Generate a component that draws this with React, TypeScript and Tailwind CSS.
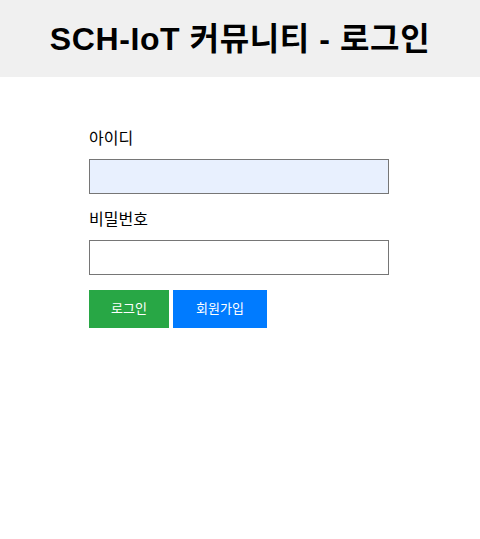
export default function App() {
  return (
    <div className="min-h-[539px] bg-white font-['Liberation_Sans','Noto_Sans_CJK_KR',sans-serif] text-black">
      {/* 헤더 */}
      <header className="bg-[#f0f0f0] h-[77px] flex items-center justify-center">
        <h1 className="text-[32px] font-bold leading-none tracking-[0.6px]">SCH-IoT 커뮤니티 - 로그인</h1>
      </header>

      {/* 로그인 폼 */}
      <form className="mx-auto w-[302px] pt-[50px]" onSubmit={(e) => e.preventDefault()}>
        <label className="block text-[16px] leading-[24px]">아이디</label>
        <input
          type="text"
          className="mt-[8px] block w-[300px] h-[35px] border border-[#767676] bg-[#e8f0fe] px-2 outline-none"
        />
        <label className="mt-[14px] block text-[16px] leading-[24px]">비밀번호</label>
        <input
          type="password"
          className="mt-[8px] block w-[300px] h-[35px] border border-[#767676] bg-white px-2 outline-none"
        />
        <div className="mt-[15px] flex gap-[4px]">
          <button type="submit" className="w-[80px] h-[38px] bg-[#28a745] text-white text-[13px]">
            로그인
          </button>
          <button type="button" className="w-[94px] h-[38px] bg-[#007bff] text-white text-[13px]">
            회원가입
          </button>
        </div>
      </form>
    </div>
  )
}
